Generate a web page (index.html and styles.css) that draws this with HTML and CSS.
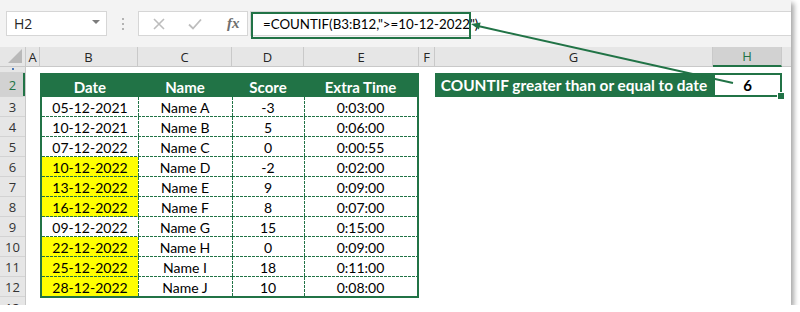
FILE: index.html
```html
<!DOCTYPE html>
<html>
<head>
<meta charset="utf-8">
<link rel="stylesheet" href="styles.css">
</head>
<body>
<div class="window">
  <div class="toolbar">
    <div class="namebox"><span>H2</span><span class="caret"></span></div>
    <div class="grip"><i></i><i></i><i></i></div>
    <div class="fxgroup">
      <svg class="ico" width="12" height="12" viewBox="0 0 12 12"><path d="M1 1 L11 11 M11 1 L1 11" stroke="#bdbdbd" stroke-width="1.6" fill="none"/></svg>
      <svg class="ico" width="14" height="12" viewBox="0 0 14 12"><path d="M1 6.5 L5 10.5 L13 1.5" stroke="#bdbdbd" stroke-width="1.8" fill="none"/></svg>
      <span class="fx">fx</span>
    </div>
    <div class="formula"><span>=COUNTIF(B3:B12,"&gt;=10-12-2022")</span></div>
  </div>
  <div class="colheads">
    <div class="ch corner"><svg width="14" height="14" viewBox="0 0 14 14"><path d="M14 0 L14 14 L0 14 Z" fill="#b9b9b9"/></svg></div>
    <div class="ch w-a">A</div>
    <div class="ch w-b">B</div>
    <div class="ch w-c">C</div>
    <div class="ch w-d">D</div>
    <div class="ch w-e">E</div>
    <div class="ch w-f">F</div>
    <div class="ch w-g">G</div>
    <div class="ch w-h sel">H</div>
    <div class="ch rest"></div>
  </div>
  <div class="sheet">
    <div class="rowheads">
      <div class="rh r1"><i class="dot"></i></div>
      <div class="rh r2 sel">2</div>
      <div class="rh">3</div>
      <div class="rh">4</div>
      <div class="rh">5</div>
      <div class="rh">6</div>
      <div class="rh">7</div>
      <div class="rh">8</div>
      <div class="rh">9</div>
      <div class="rh">10</div>
      <div class="rh">11</div>
      <div class="rh">12</div>
      <div class="rh r13">13</div>
    </div>
    <div class="cells">
      <div class="data">
        <div class="tr head"><div class="c">Date</div><div class="c">Name</div><div class="c">Score</div><div class="c">Extra Time</div></div>
        <div class="tr"><div class="c">05-12-2021</div><div class="c">Name A</div><div class="c">-3</div><div class="c">0:03:00</div></div>
        <div class="tr"><div class="c">10-12-2021</div><div class="c">Name B</div><div class="c">5</div><div class="c">0:06:00</div></div>
        <div class="tr"><div class="c">07-12-2022</div><div class="c">Name C</div><div class="c">0</div><div class="c">0:00:55</div></div>
        <div class="tr"><div class="c hl">10-12-2022</div><div class="c">Name D</div><div class="c">-2</div><div class="c">0:02:00</div></div>
        <div class="tr"><div class="c hl">13-12-2022</div><div class="c">Name E</div><div class="c">9</div><div class="c">0:09:00</div></div>
        <div class="tr"><div class="c hl">16-12-2022</div><div class="c">Name F</div><div class="c">8</div><div class="c">0:07:00</div></div>
        <div class="tr"><div class="c">09-12-2022</div><div class="c">Name G</div><div class="c">15</div><div class="c">0:15:00</div></div>
        <div class="tr"><div class="c hl">22-12-2022</div><div class="c">Name H</div><div class="c">0</div><div class="c">0:09:00</div></div>
        <div class="tr"><div class="c hl">25-12-2022</div><div class="c">Name I</div><div class="c">18</div><div class="c">0:11:00</div></div>
        <div class="tr last"><div class="c hl">28-12-2022</div><div class="c">Name J</div><div class="c">10</div><div class="c">0:08:00</div></div>
      </div>
      <div class="label">COUNTIF greater than or equal to date</div>
      <div class="result">6<span class="handle"></span></div>
    </div>
  </div>
  <div class="annot"></div>
  <svg class="arrow" width="791" height="305" viewBox="0 0 791 305">
    <line x1="733" y1="83" x2="478" y2="26" stroke="#217346" stroke-width="2"/>
    <polygon points="471,24 480.6,22.4 479,29.6" fill="#217346"/>
  </svg>
</div>
</body>
</html>
```
FILE: styles.css
```css
* { box-sizing: border-box; margin: 0; padding: 0; }
body { margin: 0; background: #fff; font-family: Lato, "Open Sans", sans-serif; }

.window {
  position: relative;
  width: 791px;
  height: 305px;
  overflow: hidden;
  background: #fff;
  box-shadow: 3px 3px 5px rgba(0, 0, 0, 0.35);
}

/* formula bar */
.toolbar {
  height: 47px;
  background: #f3f3f3;
  display: flex;
  align-items: flex-start;
  padding: 11px 0 0 6px;
}
.namebox {
  width: 101px;
  height: 25px;
  background: #fff;
  border: 1px solid #d6d6d6;
  display: flex;
  align-items: center;
  justify-content: space-between;
  padding: 0 6px 0 7px;
  font-family: "Open Sans", sans-serif;
  font-size: 14px;
  color: #262626;
}
.caret {
  width: 0; height: 0;
  border-left: 4px solid transparent;
  border-right: 4px solid transparent;
  border-top: 4px solid #7c7c7c;
  margin-top: -3px;
}
.grip {
  width: 31px;
  height: 25px;
  display: flex;
  flex-direction: column;
  align-items: center;
  justify-content: center;
  gap: 3px;
}
.grip i { display: block; width: 2px; height: 2px; background: #b3b3b3; }
.fxgroup {
  width: 110px;
  height: 25px;
  background: #fff;
  border: 1px solid #d6d6d6;
  display: flex;
  align-items: center;
  padding-left: 14px;
  gap: 23px;
}
.fx {
  font-family: "Liberation Serif", serif;
  font-style: italic;
  font-weight: 700;
  font-size: 15px;
  color: #6e6e6e;
  margin-left: 2px;
}
.formula {
  flex: 1;
  height: 25px;
  margin-left: 2px;
  background: #fff;
  border: 1px solid #d6d6d6;
  border-right: none;
  display: flex;
  align-items: center;
  padding-left: 12px;
  font-size: 13.3px;
  color: #000;
  white-space: nowrap;
}

/* column headers */
.colheads {
  display: flex;
  height: 20px;
  background: #e6e6e6;
  border-bottom: 1px solid #c9c9c9;
}
.ch {
  display: flex;
  align-items: center;
  justify-content: center;
  border-right: 1px solid #c9c9c9;
  font-family: "Open Sans", sans-serif;
  font-size: 13px;
  color: #262626;
  flex: none;
}
.corner { width: 26px; justify-content: flex-end; align-items: flex-end; padding: 0 3px 3px 0; }
.w-a { width: 14px; }
.w-b { width: 98px; }
.w-c { width: 94px; }
.w-d { width: 72px; }
.w-e { width: 115px; }
.w-f { width: 16px; }
.w-g { width: 278px; }
.w-h { width: 69px; }
.ch.sel { background: #d2d2d2; color: #217346; border-bottom: 2px solid #217346; margin-bottom: -1px; }
.rest { flex: 1; border-right: none; }

/* sheet */
.sheet { display: flex; }
.rowheads {
  width: 26px;
  flex: none;
  background: #e6e6e6;
  border-right: 1px solid #c9c9c9;
  display: flex;
  flex-direction: column;
}
.rh {
  height: 20px;
  flex: none;
  display: flex;
  align-items: center;
  justify-content: center;
  border-bottom: 1px solid #d3d3d3;
  font-family: "Open Sans", sans-serif;
  font-size: 13px;
  color: #333;
}
.rh.r1 { height: 6px; align-items: flex-start; }
.rh .dot { display: block; width: 2px; height: 2px; background: #4a78b8; margin-top: 1px; }
.rh.r2 { height: 24px; }
.rh.r13 { align-items: flex-start; padding-top: 2px; }
.rh.sel { background: #d2d2d2; color: #217346; box-shadow: inset -2px 0 0 #217346; }

.cells {
  flex: 1;
  display: grid;
  grid-template-columns: 14px 98px 94px 72px 115px 16px 278px 69px 1fr;
  grid-template-rows: 6px 24px repeat(10, 20px) 1fr;
}

/* data table */
.data {
  grid-column: 2 / 6;
  grid-row: 2 / 13;
  align-self: start;
  border: 2px solid #217346;
  display: flex;
  flex-direction: column;
}
.tr {
  display: grid;
  grid-template-columns: 96px 94px 72px 113px;
  height: 20px;
}
.tr.head { height: 22px; background: #217346; }
.tr.last { height: 19px; }
.c {
  display: flex;
  align-items: center;
  justify-content: center;
  font-size: 14px;
  color: #000;
  background-image:
    repeating-linear-gradient(90deg, #217346 0 3px, transparent 3px 4px),
    repeating-linear-gradient(180deg, #217346 0 3px, transparent 3px 4px);
  background-position: left bottom, left top;
  background-size: 100% 1px, 1px 100%;
  background-repeat: no-repeat;
  padding-top: 1px;
}
.tr .c:first-child { background-size: 100% 1px, 0 0; }
.tr.last .c { background-size: 0 0, 1px 100%; }
.tr.last .c:first-child { background-size: 0 0, 0 0; }
.tr.head .c { background: none; color: #fff; font-weight: 700; font-size: 15px; }
.c.hl { background-color: #ffff00; }

.label {
  grid-column: 7;
  grid-row: 2;
  background: #217346;
  color: #fff;
  font-weight: 700;
  font-size: 15.4px;
  display: flex;
  align-items: center;
  justify-content: center;
  white-space: nowrap;
}
.result {
  grid-column: 8;
  grid-row: 2;
  position: relative;
  border: 2px solid #217346;
  background: #fff;
  display: flex;
  align-items: center;
  justify-content: center;
  font-weight: 700;
  font-size: 15px;
  color: #000;
}
.handle {
  position: absolute;
  right: -4px;
  bottom: -4px;
  width: 6px;
  height: 6px;
  background: #217346;
  outline: 1px solid #fff;
}

/* annotation overlays */
.annot {
  position: absolute;
  left: 251px;
  top: 12px;
  width: 220px;
  height: 27px;
  border: 2px solid #217346;
}
.arrow { position: absolute; left: 0; top: 0; pointer-events: none; }
```
